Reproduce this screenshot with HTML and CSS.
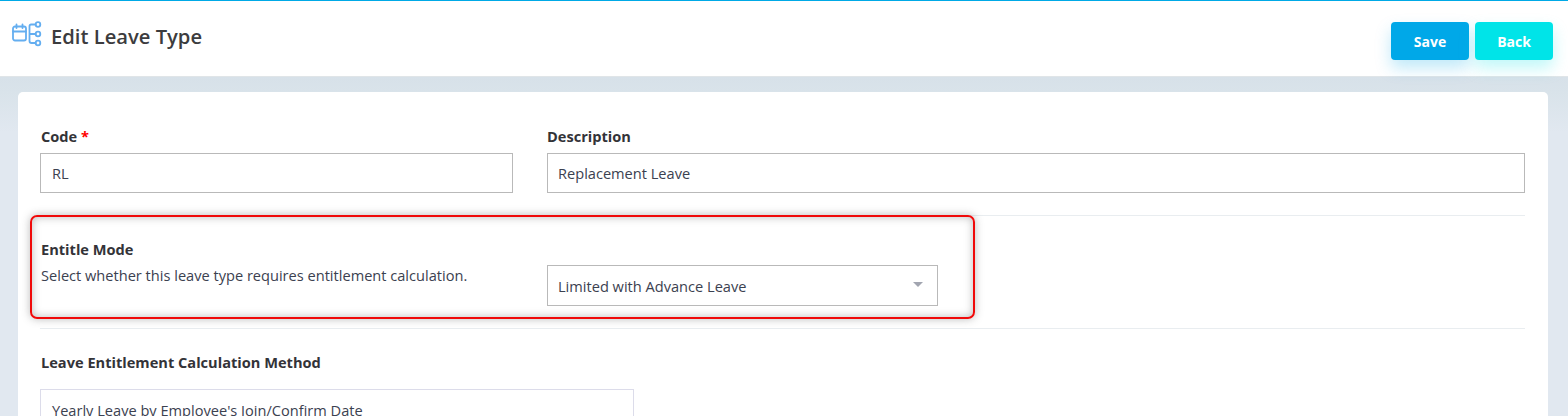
FILE: index.html
```html
<!DOCTYPE html>
<html lang="en">
<head>
<meta charset="utf-8">
<title>Edit Leave Type</title>
<link rel="stylesheet" href="styles.css">
</head>
<body>
<header class="topbar">
  <div class="title-group">
    <svg class="title-icon" width="30" height="27" viewBox="0 0 30 27" fill="none" stroke="#64aef0" stroke-width="1.8" stroke-linecap="round" stroke-linejoin="round">
      <rect x="1" y="6.500" width="13" height="14" rx="2"/>
      <path d="M1 11.500h13M4.500 4.500v3.500M10.500 4.500v3.500"/>
      <path d="M17.500 6v15a2 2 0 0 0 2 2h4M17.500 14h6M17.500 6a1.500 1.500 0 0 1 1.500-1.500h4.500"/>
      <circle cx="26" cy="4.500" r="2.300"/>
      <circle cx="26" cy="14" r="2.300"/>
      <circle cx="26" cy="23" r="2.300"/>
    </svg>
    <h1 class="title">Edit Leave Type</h1>
  </div>
  <div class="actions">
    <button class="btn btn-save" type="button">Save</button>
    <button class="btn btn-back" type="button">Back</button>
  </div>
</header>
<main class="content">
  <section class="card">
    <div class="row row-top">
      <div class="field">
        <label class="label label-first">Code <span class="req">*</span></label>
        <div class="input input-first">RL</div>
      </div>
      <div class="field">
        <label class="label">Description</label>
        <div class="input">Replacement Leave</div>
      </div>
    </div>
    <div class="row row-mode">
      <div class="mode-text">
        <div class="label label-first">Entitle Mode</div>
        <p class="hint">Select whether this leave type requires entitlement calculation.</p>
      </div>
      <div class="select">
        <span>Limited with Advance Leave</span>
        <span class="caret"></span>
      </div>
    </div>
    <div class="row-method">
      <div class="label label-first">Leave Entitlement Calculation Method</div>
      <div class="input input-first input-light">Yearly Leave by Employee's Join/Confirm Date</div>
    </div>
  </section>
</main>
<div class="highlight"></div>
</body>
</html>
```
FILE: styles.css
```css
* { box-sizing: border-box; }
html, body { height: 100%; }
body {
  margin: 0;
  height: 416px;
  overflow: hidden;
  position: relative;
  font-family: "Open Sans", sans-serif;
  font-size: 14.6px;
  color: #3b3b3f;
  background: #e1e8f0;
}
.topbar {
  height: 77px;
  background: #fff;
  border-top: 1px solid #00a9e6;
  border-bottom: 1px solid #e0e5e8;
  display: flex;
  justify-content: space-between;
  padding: 0 15px 0 12px;
}
.title-group { display: flex; align-items: flex-start; padding-top: 19px; }
.title-icon { margin-right: 9px; }
.title {
  margin: 0;
  font-size: 20.200px;
  font-weight: 600;
  line-height: 32px;
  color: #3c3c3e;
}
.actions { display: flex; gap: 6px; padding-top: 21px; align-items: flex-start; }
.btn {
  width: 78px;
  height: 38px;
  border: 0;
  border-radius: 4px;
  color: #fff;
  font: 700 14px "Open Sans", sans-serif;
}
.btn-save { background: #00a8e8; box-shadow: 0 8px 16px rgba(0, 168, 232, .25); }
.btn-back { background: #00e4e8; box-shadow: 0 8px 16px rgba(0, 228, 232, .25); }
.content {
  height: 339px;
  padding: 15px 20px 0 18px;
  background: linear-gradient(180deg, #d7e1e9 0, #d9e3ea 15px, #e1e8f0 55px);
}
.card {
  background: #fff;
  border-radius: 5px;
  padding: 34px 23px 0 22px;
}
.row { display: grid; gap: 34px; }
.row-top {
  grid-template-columns: 473px 978px;
  padding-bottom: 22px;
  border-bottom: 1px solid #e9edf0;
}
.label { display: block; font-weight: 700; line-height: 20px; color: #333338; }
.label-first { padding-left: 1px; }
.req { color: #f00; }
.field .label { margin-bottom: 7px; }
.input, .select {
  border: 1px solid #b9b9b9;
  padding: 0 10px;
  line-height: 38px;
  height: 40px;
  color: #3b4150;
}
.input-first { padding-left: 11px; }
.row-mode {
  grid-template-columns: 473px 391px;
  height: 113px;
  border-bottom: 1px solid #e9edf0;
  padding-top: 23px;
}
.hint { margin: 6px 0 0; padding-left: 1px; line-height: 20px; color: #3b4150; }
.select {
  height: 41px;
  line-height: 41px;
  margin-top: 26px;
  display: flex;
  justify-content: space-between;
  align-items: center;
  padding-right: 14px;
}
.select span:first-child { padding-top: 2px; }
.caret {
  width: 0;
  height: 0;
  border: 5px solid transparent;
  border-top-color: #a2a5b0;
  border-bottom-width: 0;
  margin-top: -2px;
}
.row-method { padding-top: 23px; }
.input-light {
  width: 594px;
  margin-top: 17px;
  border-color: #dcdcea;
  height: 44px;
  line-height: 40px;
}
.highlight {
  position: absolute;
  left: 30px;
  top: 215px;
  width: 945px;
  height: 104px;
  border: 2px solid #f00a0a;
  border-radius: 7px;
  box-shadow: 0 0 8px rgba(60, 60, 60, .35), inset 0 0 8px rgba(60, 60, 60, .35);
}
```
